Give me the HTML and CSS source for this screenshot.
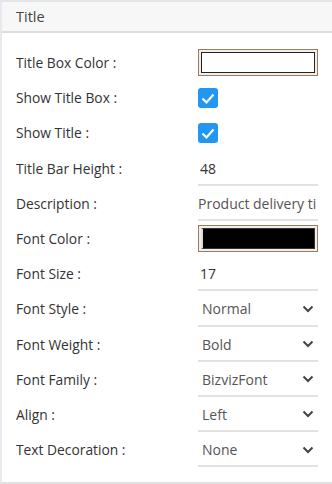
FILE: index.html
```html
<!DOCTYPE html>
<html>
<head>
<meta charset="utf-8">
<link rel="stylesheet" href="styles.css">
</head>
<body>
<div class="panel">
  <div class="panel-head">Title</div>
  <div class="panel-body">
    <div class="row"><span class="label">Title Box Color :</span><div class="ctl"><div class="color"><div class="swatch white"></div></div></div></div>
    <div class="row"><span class="label">Show Title Box :</span><div class="ctl"><span class="check"><svg viewBox="0 0 20 20" width="20" height="20"><path d="M4.5 10.5 L8.5 14.5 L15.5 6.5" fill="none" stroke="#fff" stroke-width="2.2"/></svg></span></div></div>
    <div class="row"><span class="label">Show Title :</span><div class="ctl"><span class="check"><svg viewBox="0 0 20 20" width="20" height="20"><path d="M4.5 10.5 L8.5 14.5 L15.5 6.5" fill="none" stroke="#fff" stroke-width="2.2"/></svg></span></div></div>
    <div class="row"><span class="label">Title Bar Height :</span><div class="ctl"><div class="field dark">48</div></div></div>
    <div class="row"><span class="label">Description :</span><div class="ctl"><div class="field clip"><span class="clip-text">Product delivery time</span></div></div></div>
    <div class="row"><span class="label">Font Color :</span><div class="ctl"><div class="color"><div class="swatch black"></div></div></div></div>
    <div class="row"><span class="label">Font Size :</span><div class="ctl"><div class="field dark">17</div></div></div>
    <div class="row"><span class="label">Font Style :</span><div class="ctl"><div class="field select"><span>Normal</span><svg class="chev" viewBox="0 0 12 8" width="12" height="8"><path d="M1.5 1.5 L6 6 L10.5 1.5" fill="none" stroke="#444" stroke-width="2"/></svg></div></div></div>
    <div class="row"><span class="label">Font Weight :</span><div class="ctl"><div class="field select"><span>Bold</span><svg class="chev" viewBox="0 0 12 8" width="12" height="8"><path d="M1.5 1.5 L6 6 L10.5 1.5" fill="none" stroke="#444" stroke-width="2"/></svg></div></div></div>
    <div class="row"><span class="label">Font Family :</span><div class="ctl"><div class="field select"><span>BizvizFont</span><svg class="chev" viewBox="0 0 12 8" width="12" height="8"><path d="M1.5 1.5 L6 6 L10.5 1.5" fill="none" stroke="#444" stroke-width="2"/></svg></div></div></div>
    <div class="row"><span class="label">Align :</span><div class="ctl"><div class="field select"><span>Left</span><svg class="chev" viewBox="0 0 12 8" width="12" height="8"><path d="M1.5 1.5 L6 6 L10.5 1.5" fill="none" stroke="#444" stroke-width="2"/></svg></div></div></div>
    <div class="row"><span class="label">Text Decoration :</span><div class="ctl"><div class="field select"><span>None</span><svg class="chev" viewBox="0 0 12 8" width="12" height="8"><path d="M1.5 1.5 L6 6 L10.5 1.5" fill="none" stroke="#444" stroke-width="2"/></svg></div></div></div>
  </div>
</div>
</body>
</html>
```
FILE: styles.css
```css
html, body {
  margin: 0;
  padding: 0;
  background: #fff;
}
body {
  font-family: "Open Sans", "Noto Sans", sans-serif;
  color: #333;
}
.panel {
  width: 332px;
  height: 484px;
  box-sizing: border-box;
  border-top: 2px solid #e2e6ea;
  border-left: 2px solid #e6eaee;
  border-bottom: 2px solid #e2e2e2;
  display: flex;
  flex-direction: column;
}
.panel-head {
  height: 31px;
  box-sizing: border-box;
  background: #f7f7f7;
  border-bottom: 2px solid #dcdfe2;
  padding-left: 14px;
  font-size: 14.5px;
  line-height: 29px;
  color: #444;
}
.panel-body {
  padding-top: 12px;
  display: flex;
  flex-direction: column;
}
.row {
  height: 35.2px;
  display: flex;
  align-items: center;
}
.label {
  width: 182px;
  padding-left: 14px;
  font-size: 13.8px;
  color: #333;
  white-space: nowrap;
}
.ctl {
  width: 120px;
  height: 100%;
  display: flex;
  align-items: center;
}
.color {
  width: 120px;
  height: 27px;
  box-sizing: border-box;
  border: 1px solid #9c7b5b;
  background: #efefef;
  padding: 2px;
}
.swatch {
  height: 100%;
  box-sizing: border-box;
  border: 1px solid #222;
}
.swatch.white { background: #fff; }
.swatch.black { background: #000; border-color: #333; border-left: 2px solid #ddd; }
.check {
  width: 20px;
  height: 20px;
  border-radius: 3px;
  background: #2196f3;
  display: block;
}
.check svg { display: block; }
.field {
  width: 120px;
  height: 100%;
  box-sizing: border-box;
  border-bottom: 2px solid #e2e2e2;
  font-size: 14px;
  color: #555;
  display: flex;
  align-items: center;
  padding: 2px 0 0 0;
  white-space: nowrap;
  overflow: hidden;
}
.field.dark { color: #333; padding-left: 2px; }
.clip-text {
  display: block;
  width: 118px;
  overflow: hidden;
  white-space: nowrap;
}
.field.select {
  padding-left: 4px;
  justify-content: space-between;
  padding-right: 4px;
}
.chev { display: block; }
```
